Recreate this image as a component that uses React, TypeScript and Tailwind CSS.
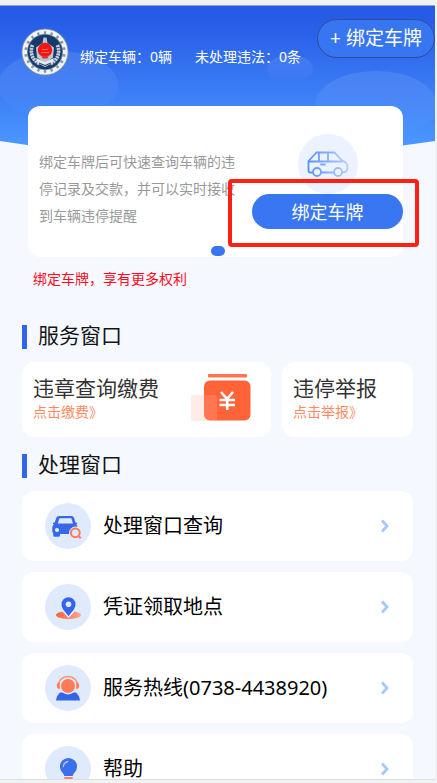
import type { ReactNode } from "react";

const ringTicks = Array.from({ length: 18 }, (_, i) => i * 20);

function Emblem() {
  return (
    <svg viewBox="0 0 48 48" className="mt-[22px] size-12 shrink-0" role="img" aria-label="徽标">
      <circle cx="24" cy="24" r="23.5" fill="#7f95ad" />
      <circle cx="24" cy="24" r="22.6" fill="#f1f3f3" />
      {ringTicks.map((a) => (
        <rect key={a} x="22.8" y="3.2" width="2.4" height="3" rx="0.6" fill="#8797a5" transform={`rotate(${a} 24 24)`} />
      ))}
      <circle cx="24" cy="24" r="18" fill="#6f879e" />
      <circle cx="24" cy="24" r="17.2" fill="#143a6b" />
      <path d="M11.500 17c-3 8 0 15.500 7.500 19M36.500 17c3 8 0 15.500-7.500 19" stroke="#c3ced8" strokeWidth="3.6" strokeDasharray="2.2 .6" fill="none" />
      <path d="M22.500 9.500h3l1 5.500 6.500 4.500-1 10-8 6-8-6-1-10 6.500-4.500z" fill="#b9c6d1" />
      <path d="M15 30l9 4 9-4-1.500 5-7.500 4-7.500-4z" fill="#e6eaec" />
      <path d="M18 35l6 2.500 6-2.500" stroke="#345577" strokeWidth="1.200" fill="none" />
      <circle cx="24" cy="22" r="7.200" fill="#f5141a" />
      <path d="M20 24.500h8M21 21.500h6" stroke="#ff6a4d" strokeWidth="1" />
      <path d="M20.500 28.500h7l-1 2h-5z" fill="#d8343a" />
    </svg>
  );
}

function HeroBackdrop() {
  return (
    <svg
      viewBox="0 0 435 152"
      preserveAspectRatio="none"
      className="absolute inset-x-0 top-0 h-[152px] w-full"
      aria-hidden="true"
    >
      <defs>
        <linearGradient id="sky" x1="0" y1="0" x2="0" y2="1">
          <stop offset="0" stopColor="#2759e5" />
          <stop offset="0.12" stopColor="#285de8" />
          <stop offset="0.9" stopColor="#4b96ff" />
          <stop offset="1" stopColor="#4f9bff" />
        </linearGradient>
        <linearGradient id="haze" x1="0" y1="0" x2="0" y2="1">
          <stop offset="0" stopColor="#fff" stopOpacity="0.1" />
          <stop offset="1" stopColor="#fff" stopOpacity="0" />
        </linearGradient>
      </defs>
      <path d="M0 0H435V135Q217 169 0 135Z" fill="url(#sky)" />
      <ellipse cx="58" cy="79" rx="60" ry="34" fill="url(#haze)" />
      <ellipse cx="290" cy="63" rx="23" ry="14" fill="url(#haze)" />
      <ellipse cx="376" cy="99" rx="61" ry="34" fill="url(#haze)" />
    </svg>
  );
}

function VanIcon() {
  return (
    <svg viewBox="0 0 42 28" className="h-7 w-[42px]" fill="none" stroke="url(#van)" strokeWidth="1.800" strokeLinejoin="round" strokeLinecap="round" aria-hidden="true">
      <defs>
        <linearGradient id="van" gradientUnits="userSpaceOnUse" x1="0" y1="0" x2="42" y2="0">
          <stop offset="0" stopColor="#558ff8" />
          <stop offset="1" stopColor="#b7d0ff" />
        </linearGradient>
      </defs>
      <path d="M5.500 22.500H3.500Q1.500 22.500 1.500 20.500V11L9.500 2.500H27.500L35 10.500Q40.500 12 40.500 17.500 40.500 22.500 35.500 22.500M14.500 22.500H26.500" />
      <path d="M2 11.500H35M12 3V11.500M21 3V11.500M14 14.500H18" />
      <circle cx="10" cy="22" r="4" />
      <circle cx="31" cy="22" r="4" />
    </svg>
  );
}

function PayIcon() {
  return (
    <svg viewBox="0 0 60 47" className="h-[47px] w-[60px] shrink-0" aria-hidden="true">
      <rect x="17" y="0" width="39" height="3.500" rx="1" fill="#ff7450" />
      <rect x="13" y="6.500" width="46.500" height="40" rx="6" fill="#ff6338" />
      <rect x="0" y="21" width="26" height="26" rx="3" fill="#ffb3a0" fillOpacity="0.25" />
      <path d="M30 18l6 7 6-7M28.500 26h15.500M28.500 31h15.500M36.200 25V36" stroke="#fff" strokeWidth="2.600" fill="none" />
    </svg>
  );
}

function CarSearchIcon() {
  return (
    <svg viewBox="0 0 46 46" className="size-full" aria-hidden="true">
      <path d="M14 13h12.500q2 0 2.500 1.800l1.500 4.700 1.700.2q.5 1.300-1 1.800 1.300 1.200 1.300 3V31H15v1.200q0 1.500-1.500 1.500H9.700q-1.500 0-1.500-1.500V30q-.9-.6-.9-2v-3.500q0-2 1.600-3-1.500-.5-1-1.800l1.800-.2 1.600-4.700Q12 13 14 13z" fill="#3768e8" />
      <path d="M14.500 15.200h11.800l1.700 5.300H12.700z" fill="#dfe9ff" />
      <circle cx="12" cy="27" r="2.100" fill="#e4edff" />
      <circle cx="30.500" cy="30" r="6.500" fill="#e0eafd" />
      <circle cx="30.300" cy="29.800" r="4.400" fill="none" stroke="#ff7a59" strokeWidth="2" />
      <path d="M33.300 32.800l2.500 2.500" stroke="#ff8061" strokeWidth="2.200" />
    </svg>
  );
}

function PlaceIcon() {
  return (
    <svg viewBox="0 0 46 46" className="size-full" aria-hidden="true">
      <defs>
        <linearGradient id="ground">
          <stop offset="0" stopColor="#ff6238" />
          <stop offset="1" stopColor="#ffa68e" />
        </linearGradient>
      </defs>
      <ellipse cx="23.500" cy="31" rx="12.500" ry="4" fill="url(#ground)" />
      <path d="M23.500 34l-7.500-8h15z" fill="#e0eafd" />
      <path d="M23.500 32.200C21 28.700 16.500 25 16.500 20.300a7 7 0 0114 0c0 4.700-4.500 8.400-7 11.900z" fill="#3265e9" />
      <circle cx="23.500" cy="20.300" r="2.800" fill="#e0eafd" />
    </svg>
  );
}

function HotlineIcon() {
  return (
    <svg viewBox="0 0 46 46" className="size-full" aria-hidden="true">
      <path d="M11 35.500q.5-5 4-8h16q3.500 3 4 8z" fill="#3166e8" />
      <circle cx="23" cy="21" r="8.400" fill="#e0eafd" />
      <circle cx="23" cy="21" r="7" fill="#ff7a57" />
      <path d="M13.800 18.500C15.500 9 30.500 9 32.200 18.500" stroke="#ff9076" strokeWidth="1.500" fill="none" />
      <path d="M14.800 17v7.200q-3-.5-3-3.600t3-3.600zM31.200 17v7.200q3-.5 3-3.600t-3-3.600z" fill="#ff7a57" />
    </svg>
  );
}

function BulbIcon() {
  return (
    <svg viewBox="0 0 46 46" className="size-full" aria-hidden="true">
      <path d="M19.300 30q-.3-2-1.800-3.300a8.600 8.600 0 1112 0q-1.500 1.300-1.800 3.300z" fill="#3b6eea" />
      <path d="M18.300 20.500q.5-4 4.500-5" stroke="#b5ccff" strokeWidth="1.300" fill="none" strokeLinecap="round" />
      <path d="M19.300 32h8.400" stroke="#ff7651" strokeWidth="1.800" />
      <path d="M20.700 35h5.600" stroke="#ff7651" strokeWidth="1.800" />
    </svg>
  );
}

function SectionTitle({ children }: { children: ReactNode }) {
  return (
    <div className="flex items-end gap-[11px]">
      <span className="h-6 w-[5px] bg-[#3064ea]" />
      <h2 className="text-[21px] leading-7 text-[#141414]">{children}</h2>
    </div>
  );
}

function ServiceCard({ title, hint, children }: { title: string; hint: string; children?: ReactNode }) {
  return (
    <button type="button" className="flex h-[75px] items-start justify-between rounded-xl bg-white pt-3 pr-5 pl-[11px] text-left">
      <span className="flex flex-col whitespace-nowrap">
        <span className="text-[21px] leading-7 text-[#333]">{title}</span>
        <span className="text-sm text-[#ff8a63]">{hint}</span>
      </span>
      {children}
    </button>
  );
}

const rows = [
  { label: "处理窗口查询", icon: <CarSearchIcon /> },
  { label: "凭证领取地点", icon: <PlaceIcon /> },
  { label: "服务热线(0738-4438920)", icon: <HotlineIcon /> },
  { label: "帮助", icon: <BulbIcon /> },
];

export default function App() {
  return (
    <div className="flex h-screen flex-col bg-[#f0f1f1] pr-0.5 font-['Noto_Sans','Noto_Sans_CJK_SC',sans-serif]">
      <div className="h-[5px] shrink-0" />
      <main className="relative min-h-0 flex-1 overflow-hidden border-y border-t-[#91a3cb] border-b-[#dcdfe3] bg-[#f5f9ff]">
        <HeroBackdrop />
        <header className="relative flex h-[100px] items-start pl-[21px]">
          <Emblem />
          <p className="mt-[41px] ml-[11px] flex gap-[23px] text-sm whitespace-nowrap text-white">
            <span>绑定车辆：0辆</span>
            <span>未处理违法：0条</span>
          </p>
          <button type="button" className="mt-[13px] ml-auto h-[39px] w-[118px] shrink-0 rounded-full border border-[#2d4d94] bg-[#3876f1] text-[19px] whitespace-nowrap text-white">
            + 绑定车牌
          </button>
        </header>

        <section className="relative mr-8 ml-7 flex h-[151px] items-start justify-between rounded-xl bg-white pl-[11px]">
          <p className="mt-[42px] w-[196px] shrink-0 text-sm leading-[27px] text-[#999]">
            绑定车牌后可快速查询车辆的违停记录及交款，并可以实时接收到车辆违停提醒
          </p>
          <div className="mt-7 flex w-[151px] flex-col items-center">
            <span className="flex h-[60px] w-[60px] items-center justify-center rounded-full bg-[#ecf2ff]">
              <VanIcon />
            </span>
            <button type="button" className="h-[35px] w-full rounded-full bg-[#3977f2] text-lg text-white">
              绑定车牌
            </button>
          </div>
          <span className="absolute bottom-px left-1/2 h-2.5 w-3.5 -translate-x-[5px] rounded-full bg-[#3977f2]" />
          <span className="absolute top-[73px] -right-4 h-[68px] w-[191px] rounded-sm border-4 border-[#ff2014]" />
        </section>

        <p className="mt-3 ml-[33px] text-sm text-[#ff0a22]">绑定车牌，享有更多权利</p>

        <div className="mx-[22px] mt-8">
          <SectionTitle>服务窗口</SectionTitle>
          <div className="mt-[13px] grid grid-cols-[249fr_131fr] gap-[11px]">
            <ServiceCard title="违章查询缴费" hint="点击缴费》">
              <PayIcon />
            </ServiceCard>
            <ServiceCard title="违停举报" hint="点击举报》" />
          </div>

          <div className="mt-[13px]">
            <SectionTitle>处理窗口</SectionTitle>
          </div>
          <nav className="mt-[13px] flex flex-col gap-[11px]">
            {rows.map((row) => (
              <button key={row.label} type="button" className="flex h-[70px] shrink-0 items-center rounded-xl bg-white pr-6 pl-[23px] text-left">
                <span className="size-[46px] shrink-0 rounded-full bg-[#e0eafd]">{row.icon}</span>
                <span className="ml-3 text-xl leading-5 whitespace-nowrap text-black">{row.label}</span>
                <svg viewBox="0 0 8 14" className="ml-auto h-3.5 w-2" fill="none" stroke="#a6c7ff" strokeWidth="2.800" aria-hidden="true">
                  <path d="M1 1.500l5 5.500-5 5.500" />
                </svg>
              </button>
            ))}
          </nav>
        </div>
      </main>
      <div className="h-[3px] shrink-0" />
    </div>
  );
}
